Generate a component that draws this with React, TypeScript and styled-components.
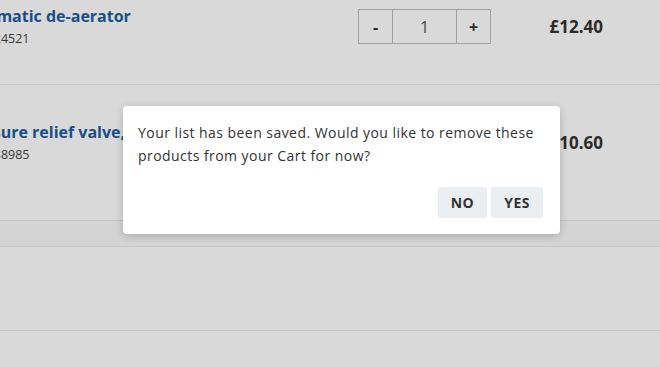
import React from 'react'
import styled, { createGlobalStyle } from 'styled-components'

const GlobalStyle = createGlobalStyle`
  body {
    margin: 0;
    font-family: "Open Sans", "Liberation Sans", sans-serif;
    background: #ffffff;
  }
`

const items = [
  { name: 'Automatic de-aerator', code: '1000024521', qty: 1, price: '£12.40', top: -31, height: 116, showQty: true },
  { name: 'Pressure relief valve, 3 bar', code: '1000338985', qty: 1, price: '£10.60', top: 0, height: 136, showQty: false },
]

export default function App() {
  return (
    <>
      <GlobalStyle />
      <Page>
        <List>
          {items.map((item, i) => (
            <Row key={i} $top={item.top} $height={item.height}>
              <Info>
                <Title>{item.name}</Title>
                <Code>{item.code}</Code>
              </Info>
              {item.showQty && (
                <Qty>
                  <QtyBtn>-</QtyBtn>
                  <QtyValue>{item.qty}</QtyValue>
                  <QtyBtn>+</QtyBtn>
                </Qty>
              )}
              <Price>{item.price}</Price>
            </Row>
          ))}
          <Band />
          <Section />
        </List>
        <Overlay />
        <Dialog>
          <Message>
            Your list has been saved. Would you like to remove these products from your Cart for now?
          </Message>
          <Actions>
            <ActionBtn>NO</ActionBtn>
            <ActionBtn>YES</ActionBtn>
          </Actions>
        </Dialog>
      </Page>
    </>
  )
}

const Page = styled.div`
  position: relative;
  width: 660px;
  height: 367px;
  overflow: hidden;
  background: #ffffff;
`

const List = styled.div`
  margin-left: -42px;
  display: flex;
  flex-direction: column;
`

const Row = styled.div<{ $top: number; $height: number }>`
  display: grid;
  grid-template-columns: 1fr 133px 112px 57px;
  align-items: start;
  box-sizing: border-box;
  height: ${p => p.$height}px;
  margin-top: ${p => p.$top}px;
  padding-top: 37px;
  border-bottom: 1px solid #e9e9e9;
`

const Info = styled.div`
  grid-column: 1;
  display: flex;
  flex-direction: column;
  gap: 5px;
`

const Title = styled.div`
  font-size: 16px;
  font-weight: 700;
  color: #1d5da3;
  line-height: 20px;
  white-space: nowrap;
`

const Code = styled.div`
  font-size: 12.5px;
  color: #444444;
  line-height: 16px;
`

const Qty = styled.div`
  grid-column: 2;
  display: flex;
  height: 35px;
  margin-top: 3px;
  box-sizing: border-box;
  border: 1px solid #bdbdbd;
`

const QtyBtn = styled.div`
  width: 33px;
  display: flex;
  align-items: center;
  justify-content: center;
  font-size: 16px;
  font-weight: 700;
  color: #333333;
`

const QtyValue = styled.div`
  flex: 1;
  display: flex;
  align-items: center;
  justify-content: center;
  border-left: 1px solid #bdbdbd;
  border-right: 1px solid #bdbdbd;
  font-size: 16px;
  color: #555555;
`

const Price = styled.div`
  grid-column: 3;
  margin-top: 9px;
  text-align: right;
  font-size: 17px;
  font-weight: 700;
  color: #333333;
`

const Band = styled.div`
  height: 25px;
  background: #fafafa;
  border-bottom: 1px solid #e9e9e9;
`

const Section = styled.div`
  height: 83px;
  border-bottom: 1px solid #e9e9e9;
`

const Overlay = styled.div`
  position: absolute;
  inset: 0;
  background: rgba(0, 0, 0, 0.15);
`

const Dialog = styled.div`
  position: absolute;
  left: 123px;
  top: 106px;
  width: 437px;
  height: 128px;
  box-sizing: border-box;
  padding: 15px 17px 16px 15px;
  background: #ffffff;
  border-radius: 4px;
  box-shadow: 0 2px 8px rgba(0, 0, 0, 0.2);
  display: flex;
  flex-direction: column;
  justify-content: space-between;
`

const Message = styled.p`
  margin: 0;
  font-size: 14px;
  line-height: 23px;
  letter-spacing: 0.45px;
  color: #333333;
`

const Actions = styled.div`
  display: flex;
  justify-content: flex-end;
  gap: 4px;
`

const ActionBtn = styled.button`
  height: 31px;
  padding: 0 13px;
  border: none;
  border-radius: 3px;
  background: #eceff1;
  font-family: inherit;
  font-size: 14px;
  font-weight: 700;
  letter-spacing: 0.5px;
  color: #333333;
`
